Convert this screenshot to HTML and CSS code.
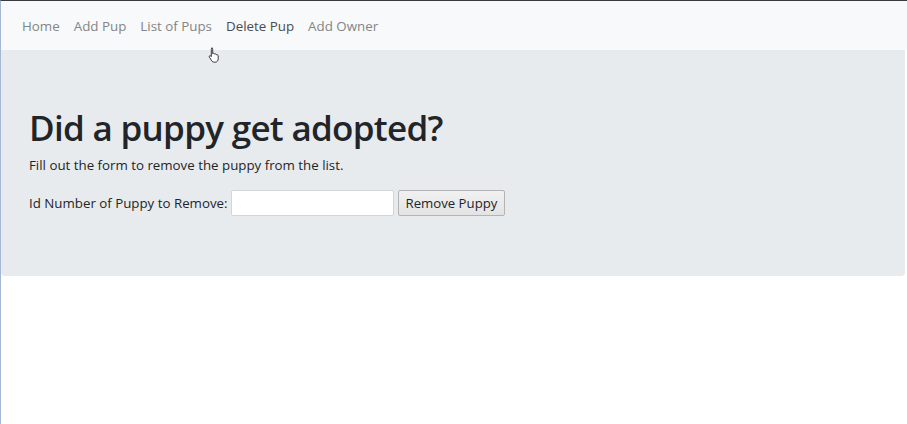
FILE: index.html
```html
<!DOCTYPE html>
<html lang="en">
<head>
<meta charset="utf-8">
<title>Delete Pup</title>
<link rel="stylesheet" href="styles.css">
</head>
<body>
<div class="frame">
  <nav class="navbar">
    <a class="nav-link" href="#">Home</a>
    <a class="nav-link" href="#">Add Pup</a>
    <a class="nav-link" href="#">List of Pups</a>
    <a class="nav-link active" href="#">Delete Pup</a>
    <a class="nav-link" href="#">Add Owner</a>
    <svg class="cursor" width="12" height="16" viewBox="0 0 12 16" aria-hidden="true">
      <path d="M3.5 1.2c.7 0 1.2.5 1.2 1.2v4.3c.3-.3.7-.4 1.1-.3.5.1.8.4.9.8.3-.3.8-.4 1.2-.2.4.2.6.5.7.9.3-.2.7-.2 1 0 .4.2.6.6.6 1v3c0 1.9-1.3 3.3-3.2 3.3H6.3c-1.1 0-1.9-.4-2.5-1.3L1.4 10.1c-.3-.5-.2-1 .2-1.3.4-.3 1-.2 1.3.2l.4.6V2.4c0-.7.5-1.2 1.2-1.2z" fill="#fff" stroke="#222" stroke-width="0.9"/>
    </svg>
  </nav>
  <main class="jumbotron">
    <h1 class="title">Did a puppy get adopted?</h1>
    <p class="lead-text">Fill out the form to remove the puppy from the list.</p>
    <form class="remove-form">
      <label class="form-label" for="pupid">Id Number of Puppy to Remove:</label>
      <input class="form-input" id="pupid" type="text">
      <button class="form-button" type="button">Remove Puppy</button>
    </form>
  </main>
</div>
</body>
</html>
```

FILE: styles.css
```css
* { box-sizing: border-box; }
html, body {
  margin: 0;
  padding: 0;
  background: #ffffff;
}
body {
  font-family: "Open Sans", "Noto Sans", sans-serif;
  color: #212529;
  height: 424px;
  overflow: hidden;
}
.frame {
  height: 424px;
  border-top: 1px solid #3a3a3a;
  border-left: 1px solid #a4b7d6;
  display: flex;
  flex-direction: column;
}
.navbar {
  position: relative;
  height: 49px;
  background: #f8f9fa;
  display: flex;
  align-items: center;
  padding: 0 14px;
}
.nav-link {
  font-size: 13.35px;
  color: #838587;
  text-decoration: none;
  padding: 0 7px;
  line-height: 20px;
}
.nav-link.active {
  color: #4a4c4e;
}
.cursor {
  position: absolute;
  left: 207px;
  top: 46px;
}
.jumbotron {
  background: #e8ebee;
  margin-right: 2px;
  border-radius: 0 0 4px 4px;
  padding: 57px 28px 60px;
}
.title {
  margin: 0 0 6px;
  font-size: 35px;
  font-weight: 600;
  line-height: 42px;
  color: #212529;
  letter-spacing: -0.7px;
}
.lead-text {
  margin: 0 0 14px;
  font-size: 13.3px;
  line-height: 21px;
  color: #212529;
}
.remove-form {
  display: flex;
  align-items: center;
  height: 26px;
}
.form-label {
  font-size: 13.3px;
  color: #212529;
  margin-right: 3px;
}
.form-input {
  width: 163px;
  height: 26px;
  border: 1px solid #d3d6d9;
  border-radius: 2px;
  background: #ffffff;
  padding: 0 4px;
  margin-right: 4px;
}
.form-button {
  height: 26px;
  padding: 0 7px;
  font-family: "Open Sans", "Noto Sans", sans-serif;
  font-size: 13.2px;
  color: #212529;
  background: linear-gradient(#f1f1f1, #e3e3e3);
  border: 1px solid #b4b4b4;
  border-radius: 2px;
}
```
